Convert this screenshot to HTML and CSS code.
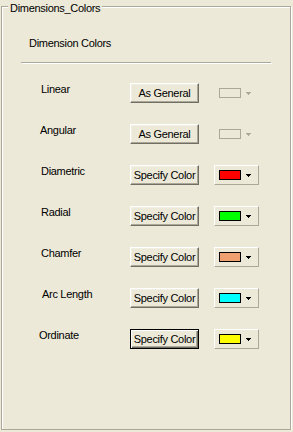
FILE: index.html
```html
<!DOCTYPE html>
<html>
<head>
<meta name="viewport" content="width=device-width, initial-scale=1.0">
<link rel="stylesheet" href="styles.css">
</head>
<body>
  <div class="group">
    <span class="group-title">Dimensions_Colors</span>
    <div class="heading">Dimension Colors</div>
    <div class="sep"></div>

    <div class="rows">
      <div class="row">
        <span class="label">Linear</span>
        <button class="btn">As General</button>
        <span class="picker off"><span class="swatch"></span><svg class="arrow" width="5" height="3"><rect x="0" y="0" width="5" height="1"/><rect x="1" y="1" width="3" height="1"/><rect x="2" y="2" width="1" height="1"/></svg></span>
      </div>
      <div class="row">
        <span class="label in-l1">Angular</span>
        <button class="btn">As General</button>
        <span class="picker off"><span class="swatch"></span><svg class="arrow" width="5" height="3"><rect x="0" y="0" width="5" height="1"/><rect x="1" y="1" width="3" height="1"/><rect x="2" y="2" width="1" height="1"/></svg></span>
      </div>
      <div class="row">
        <span class="label">Diametric</span>
        <button class="btn">Specify Color</button>
        <span class="picker"><span class="swatch red"></span><svg class="arrow" width="5" height="3"><rect x="0" y="0" width="5" height="1"/><rect x="1" y="1" width="3" height="1"/><rect x="2" y="2" width="1" height="1"/></svg></span>
      </div>
      <div class="row">
        <span class="label">Radial</span>
        <button class="btn">Specify Color</button>
        <span class="picker"><span class="swatch green"></span><svg class="arrow" width="5" height="3"><rect x="0" y="0" width="5" height="1"/><rect x="1" y="1" width="3" height="1"/><rect x="2" y="2" width="1" height="1"/></svg></span>
      </div>
      <div class="row">
        <span class="label">Chamfer</span>
        <button class="btn">Specify Color</button>
        <span class="picker"><span class="swatch salmon"></span><svg class="arrow" width="5" height="3"><rect x="0" y="0" width="5" height="1"/><rect x="1" y="1" width="3" height="1"/><rect x="2" y="2" width="1" height="1"/></svg></span>
      </div>
      <div class="row">
        <span class="label in-r1">Arc Length</span>
        <button class="btn">Specify Color</button>
        <span class="picker"><span class="swatch cyan"></span><svg class="arrow" width="5" height="3"><rect x="0" y="0" width="5" height="1"/><rect x="1" y="1" width="3" height="1"/><rect x="2" y="2" width="1" height="1"/></svg></span>
      </div>
      <div class="row">
        <span class="label in-l2">Ordinate</span>
        <button class="btn focus">Specify Color</button>
        <span class="picker"><span class="swatch yellow"></span><svg class="arrow" width="5" height="3"><rect x="0" y="0" width="5" height="1"/><rect x="1" y="1" width="3" height="1"/><rect x="2" y="2" width="1" height="1"/></svg></span>
      </div>
    </div>
  </div>
</body>
</html>
```
FILE: styles.css
```css
* {box-sizing: border-box;}

body {
  margin: 0;
  background: #ECE9D8;
  font-family: "Liberation Sans", Arial, sans-serif;
  font-size: 11px;
  letter-spacing: -0.3px;
  color: #000;
}

/* etched group box */
.group {
  position: relative;
  margin: 6px 0 0 1px;
  width: 290px;
  height: 424px;
  border: 1px solid #ACA899;
  box-shadow: inset 1px 1px #fff, 1px 1px #fff;
}

.group-title {
  position: absolute;
  top: -5px;
  left: 6px;
  padding: 0 2px;
  line-height: 13px;
  background: #ECE9D8;
}

.heading {
  margin: 30px 0 0 27px;
  line-height: 13px;
}

.sep {
  margin: 12px 0 0 19px;
  width: 250px;
  height: 1px;
  background: #ACA899;
  box-shadow: 1px 1px #fff;
}

.rows {
  margin-top: 20px;
}

.row {
  display: flex;
  align-items: flex-start;
  height: 20px;
  margin-bottom: 21px;
  padding-left: 39px;
}

.label {
  width: 89px;
  line-height: 13px;
}
.in-l1 {text-indent: -1px;}
.in-l2 {text-indent: -2px;}
.in-r1 {text-indent: 1px;}

.btn {
  width: 69px;
  height: 20px;
  padding: 0;
  font: inherit;
  letter-spacing: inherit;
  color: #000;
  background: #ECE9D8;
  border: 1px solid;
  border-color: #fff #716F64 #716F64 #fff;
  box-shadow: inset -1px -1px #ACA899, inset 1px 1px #F1EFE2;
  white-space: nowrap;
}

.btn.focus {
  border-color: #000;
  box-shadow: inset 1px 1px #fff, inset -1px -1px #716F64, inset -2px -2px #ACA899;
}

.picker {
  display: flex;
  align-items: center;
  margin-left: 15px;
  width: 45px;
  height: 20px;
  padding-left: 4px;
  border: 1px solid;
  border-color: #fff #ACA899 #ACA899 #fff;
}

.swatch {
  width: 22px;
  height: 10px;
  border: 1px solid #000;
}

.arrow {
  display: block;
  margin-left: 5px;
  fill: #000;
  shape-rendering: crispEdges;
}

.picker.off {border-color: transparent;}
.picker.off .swatch {border-color: #ACA899;}
.picker.off .arrow {fill: #ACA899;}

.red {background: #FF0000;}
.green {background: #00FF00;}
.salmon {background: #F0A070;}
.cyan {background: #00FFFF;}
.yellow {background: #FFFF00;}
```
